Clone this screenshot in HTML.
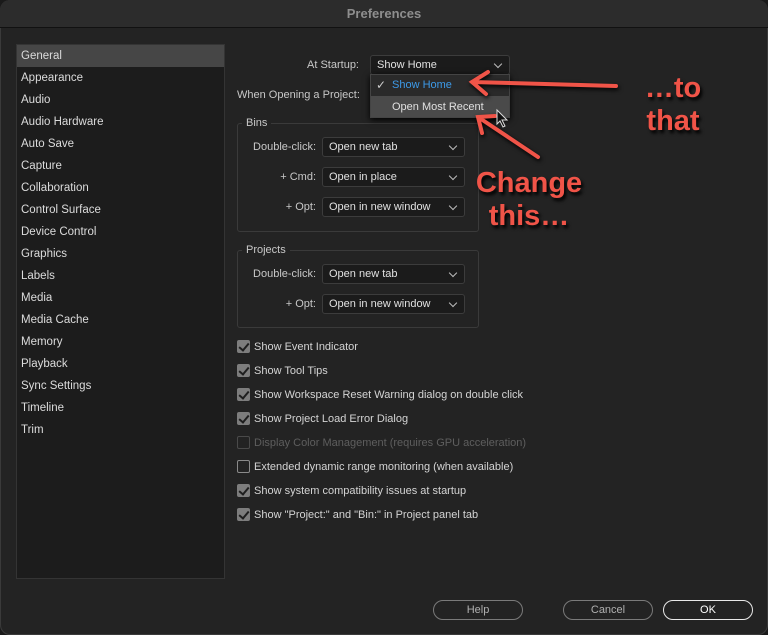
<!DOCTYPE html>
<html><head><style>
*{margin:0;padding:0;box-sizing:border-box}
body{width:768px;height:635px;background:#1a1a1a;font-family:"Liberation Sans",sans-serif;font-size:11px;color:#d6d6d6;position:relative;overflow:hidden}
.win{position:absolute;left:0;top:0;width:768px;height:635px;background:#232323;border-radius:10px;box-shadow:inset 0 0 0 1px #3a3a3a;overflow:hidden}
.title{position:absolute;left:0;top:0;width:768px;height:28px;background:#2c2c2c;border-bottom:1px solid #111;text-align:center;line-height:28px;color:#8e8e8e;font-size:13px;font-weight:bold}
.side{position:absolute;left:16px;top:44px;width:209px;height:535px;background:#1c1c1c;border:1px solid #343434}
.side div{height:22px;line-height:22px;padding-left:4px;color:#dcdcdc;font-size:11.5px}
.side .sel{background:#464646}
.abs{position:absolute}
.lbl{position:absolute;color:#c8c8c8;text-align:right}
.dd{position:absolute;height:20px;background:#1b1b1b;border:1px solid #3c3c3c;border-radius:3px;color:#e0e0e0;line-height:18px;padding-left:6px}
.dd:after{content:"";position:absolute;right:8px;top:5px;width:5px;height:5px;border-right:1.3px solid #bbb;border-bottom:1.3px solid #bbb;transform:rotate(45deg)}
.grp{position:absolute;border:1px solid #3a3a3a;border-radius:3px}
.gt{position:absolute;background:#232323;padding:0 4px;color:#c8c8c8}
.cb{position:absolute;left:237px;width:13px;height:13px;background:#7d7d7d;border-radius:2px}
.cb:after{content:"";position:absolute;left:4px;top:1px;width:4px;height:8px;border-right:2px solid #1e1e1e;border-bottom:2px solid #1e1e1e;transform:rotate(40deg)}
.cb.off{background:transparent;border:1.5px solid #8a8a8a}
.cb.off:after,.cb.dis:after{display:none}
.cb.dis{background:transparent;border:1.5px solid #4a4a4a}
.ct{position:absolute;left:254px;color:#d4d4d4;line-height:13px;margin-top:1px}
.btn{position:absolute;top:600px;width:90px;height:20px;border:1.5px solid #7a7a7a;border-radius:10px;display:flex;align-items:center;justify-content:center;color:#b0b0b0}
.red{position:absolute;color:#f05448;font-weight:bold;font-size:29px;text-shadow:2px 3px 3px #000;text-align:center;line-height:33px}
</style></head><body>
<div class="win">
<div class="title">Preferences</div>
<div class="side">
<div class="sel">General</div><div>Appearance</div><div>Audio</div><div>Audio Hardware</div><div>Auto Save</div><div>Capture</div><div>Collaboration</div><div>Control Surface</div><div>Device Control</div><div>Graphics</div><div>Labels</div><div>Media</div><div>Media Cache</div><div>Memory</div><div>Playback</div><div>Sync Settings</div><div>Timeline</div><div>Trim</div>
</div>
<div class="lbl" style="left:290px;top:59px;width:69px">At Startup:</div>
<div class="dd" style="left:370px;top:55px;width:140px">Show Home</div>
<div class="lbl" style="left:237px;top:89px;text-align:left">When Opening a Project:</div>

<div class="grp" style="left:237px;top:123px;width:242px;height:109px"></div>
<div class="gt" style="left:242px;top:117px">Bins</div>
<div class="lbl" style="left:236px;top:141px;width:80px">Double-click:</div>
<div class="dd" style="left:322px;top:137px;width:143px">Open new tab</div>
<div class="lbl" style="left:236px;top:171px;width:80px">+ Cmd:</div>
<div class="dd" style="left:322px;top:167px;width:143px">Open in place</div>
<div class="lbl" style="left:236px;top:201px;width:80px">+ Opt:</div>
<div class="dd" style="left:322px;top:197px;width:143px">Open in new window</div>

<div class="grp" style="left:237px;top:250px;width:242px;height:78px"></div>
<div class="gt" style="left:242px;top:244px">Projects</div>
<div class="lbl" style="left:236px;top:268px;width:80px">Double-click:</div>
<div class="dd" style="left:322px;top:264px;width:143px">Open new tab</div>
<div class="lbl" style="left:236px;top:298px;width:80px">+ Opt:</div>
<div class="dd" style="left:322px;top:294px;width:143px">Open in new window</div>

<div class="abs" style="left:370px;top:74px;width:140px;height:44px;background:#2a2a2a;border:1px solid #444;box-shadow:0 2px 6px #000"></div>
<div class="abs" style="left:371px;top:96px;width:138px;height:21px;background:#4a4a4a"></div>
<div class="abs" style="left:376px;top:78px;color:#ccc;font-size:12px">✓</div>
<div class="abs" style="left:392px;top:79px;color:#3d9ae8">Show Home</div>
<div class="abs" style="left:392px;top:101px;color:#e0e0e0">Open Most Recent</div>

<div class="cb" style="top:340px"></div><div class="ct" style="top:340px">Show Event Indicator</div>
<div class="cb" style="top:364px"></div><div class="ct" style="top:364px">Show Tool Tips</div>
<div class="cb" style="top:388px"></div><div class="ct" style="top:388px">Show Workspace Reset Warning dialog on double click</div>
<div class="cb" style="top:412px"></div><div class="ct" style="top:412px">Show Project Load Error Dialog</div>
<div class="cb dis" style="top:436px"></div><div class="ct" style="top:436px;color:#5e5e5e">Display Color Management (requires GPU acceleration)</div>
<div class="cb off" style="top:460px"></div><div class="ct" style="top:460px">Extended dynamic range monitoring (when available)</div>
<div class="cb" style="top:484px"></div><div class="ct" style="top:484px">Show system compatibility issues at startup</div>
<div class="cb" style="top:508px"></div><div class="ct" style="top:508px">Show "Project:" and "Bin:" in Project panel tab</div>

<div class="btn" style="left:433px">Help</div>
<div class="btn" style="left:563px">Cancel</div>
<div class="btn" style="left:663px;border-color:#e8e8e8;color:#fff">OK</div>

<svg class="abs" style="left:0;top:0" width="768" height="635">
<g stroke="#f05448" stroke-width="4" stroke-linecap="round" fill="none" filter="drop-shadow(1px 2px 2px #000)">
<path d="M616 86 L472 82 M488 72 L472 82 L486 94"/>
<path d="M538 157 L478 117 M482 133 L478 117 L495 116"/>
</g>
<path d="M497 110 L497 124 L500 121 L503 127 L505 126 L502 120 L507 120 Z" fill="#111" stroke="#ddd" stroke-width="1"/>
</svg>
<div class="red" style="left:638px;top:72px;width:70px">…to<br>that</div>
<div class="red" style="left:466px;top:167px;width:126px">Change<br>this…</div>
</div>
</body></html>
